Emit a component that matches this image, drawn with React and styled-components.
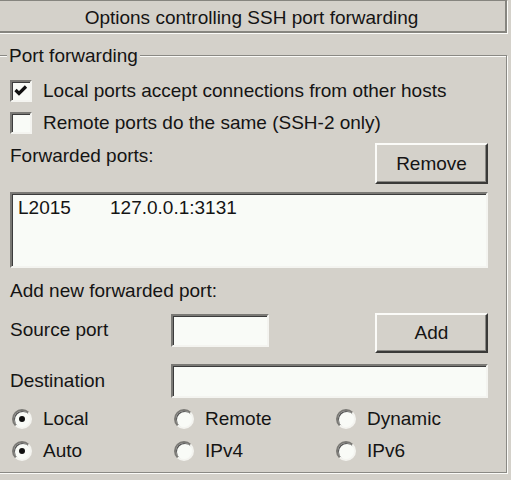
import React from 'react';
import styled, { createGlobalStyle } from 'styled-components';

const Global = createGlobalStyle`
  html, body { margin: 0; padding: 0; background: #d4d1ca; overflow: hidden; }
  body {
    font-family: "Liberation Sans", Arial, sans-serif;
    font-size: 19px;
    color: #141414;
  }
`;

const Panel = styled.div`
  width: 510px;
  height: 480px;
  margin-left: -3px;
  display: flex;
  flex-direction: column;
`;

const Header = styled.div`
  box-sizing: border-box;
  height: 33px;
  border: 1px solid #86857f;
  border-bottom-width: 2px;
  border-right-width: 2px;
  box-shadow: 1px 1px 0 #fbfbf8;
  padding-top: 3px;
  line-height: 27px;
  text-align: center;
`;

const Group = styled.div`
  position: relative;
  margin-top: 22px;
  border: 1px solid #8a8984;
  box-shadow: inset 1px 1px 0 #fbfbf8, 1px 1px 0 #fbfbf8;
  padding: 22px 18px 8px 12px;
  display: flex;
  flex-direction: column;
`;

const Legend = styled.div`
  position: absolute;
  top: -13px;
  left: 9px;
  padding: 0 2px;
  line-height: 26px;
  background: #d4d1ca;
`;

const CheckRow = styled.div`
  display: flex;
  align-items: center;
  gap: 11px;
  height: 26px;
  line-height: 26px;
  margin-top: ${p => p.$top || 0}px;
`;

const CheckBox = styled.div`
  box-sizing: border-box;
  width: 22px;
  height: 22px;
  background: #f9fbf7;
  border: 2px solid;
  border-color: #7a7975 #f4f4f0 #f4f4f0 #7a7975;
  box-shadow: inset 1px 1px 0 #3c3c3c;
  display: flex;
  align-items: center;
  justify-content: center;
`;

const Label = styled.div`
  line-height: 26px;
  white-space: nowrap;
  margin-top: ${p => p.$top || 0}px;
`;

const SplitRow = styled.div`
  display: flex;
  justify-content: space-between;
  align-items: flex-start;
  margin-top: ${p => p.$top || 0}px;
`;

const Button = styled.button`
  box-sizing: border-box;
  width: 113px;
  height: ${p => p.$h || 40}px;
  font: inherit;
  color: inherit;
  background: #d4d1ca;
  border: 2px solid;
  border-color: #fbfbf8 #3a3a38 #3a3a38 #fbfbf8;
  box-shadow: inset -1px -1px 0 #8a8984;
  padding: 0;
`;

const List = styled.div`
  box-sizing: border-box;
  height: 76px;
  margin-top: 8px;
  background: #f9fbf7;
  border: 2px solid;
  border-color: #7a7975 #f4f4f0 #f4f4f0 #7a7975;
  box-shadow: inset 1px 1px 0 #3c3c3c;
  padding: 3px 6px;
  line-height: 22px;
`;

const ListItem = styled.div`
  display: grid;
  grid-template-columns: 92px auto;
`;

const FieldRow = styled.div`
  display: grid;
  grid-template-columns: 161px ${p => p.$input}px 1fr auto;
  align-items: start;
  margin-top: ${p => p.$top || 0}px;
`;

const Input = styled.div`
  box-sizing: border-box;
  height: ${p => p.$h}px;
  margin-top: ${p => p.$top || 0}px;
  background: #f9fbf7;
  border: 2px solid;
  border-color: #7a7975 #f4f4f0 #f4f4f0 #7a7975;
  box-shadow: inset 1px 1px 0 #3c3c3c;
`;

const RadioRow = styled.div`
  display: grid;
  grid-template-columns: 162px 162px 1fr;
  padding-left: 2px;
  height: 26px;
  margin-top: ${p => p.$top || 0}px;
`;

const RadioOption = styled.div`
  display: flex;
  align-items: center;
  gap: 11px;
  line-height: 26px;
`;

const Radio = styled.div`
  position: relative;
  box-sizing: border-box;
  width: 20px;
  height: 20px;
  border-radius: 50%;
  background: #f9fbf7;
  border: 2px solid;
  border-color: #7a7975 #f4f4f0 #f4f4f0 #7a7975;
  box-shadow: inset 1px 1px 0 #555;
  &::after {
    content: '';
    display: ${p => (p.$checked ? 'block' : 'none')};
    position: absolute;
    left: 50%;
    top: 50%;
    width: 6px;
    height: 6px;
    margin: -3px 0 0 -3px;
    border-radius: 50%;
    background: #111;
  }
`;

const Check = () => (
  <svg width="16" height="16" viewBox="0 0 16 16">
    <polyline points="2.5,7 6,10.5 13,3.5" fill="none" stroke="#111" strokeWidth="3.2" />
  </svg>
);

export default function App() {
  return (
    <>
      <Global />
      <Panel>
        <Header>Options controlling SSH port forwarding</Header>
        <Group>
          <Legend>Port forwarding</Legend>
          <CheckRow>
            <CheckBox><Check /></CheckBox>
            <span>Local ports accept connections from other hosts</span>
          </CheckRow>
          <CheckRow $top={6}>
            <CheckBox />
            <span>Remote ports do the same (SSH-2 only)</span>
          </CheckRow>
          <SplitRow $top={7}>
            <Label>Forwarded ports:</Label>
            <Button $h={41}>Remove</Button>
          </SplitRow>
          <List>
            <ListItem>
              <span>L2015</span>
              <span>127.0.0.1:3131</span>
            </ListItem>
          </List>
          <Label $top={10}>Add new forwarded port:</Label>
          <FieldRow $top={9} $input={98}>
            <Label $top={4}>Source port</Label>
            <Input $h={33} $top={1} />
            <span />
            <Button $h={40}>Add</Button>
          </FieldRow>
          <FieldRow $top={11} $input={317}>
            <Label $top={4}>Destination</Label>
            <Input $h={34} />
          </FieldRow>
          <RadioRow $top={8}>
            <RadioOption><Radio $checked />Local</RadioOption>
            <RadioOption><Radio />Remote</RadioOption>
            <RadioOption><Radio />Dynamic</RadioOption>
          </RadioRow>
          <RadioRow $top={6}>
            <RadioOption><Radio $checked />Auto</RadioOption>
            <RadioOption><Radio />IPv4</RadioOption>
            <RadioOption><Radio />IPv6</RadioOption>
          </RadioRow>
        </Group>
      </Panel>
    </>
  );
}
